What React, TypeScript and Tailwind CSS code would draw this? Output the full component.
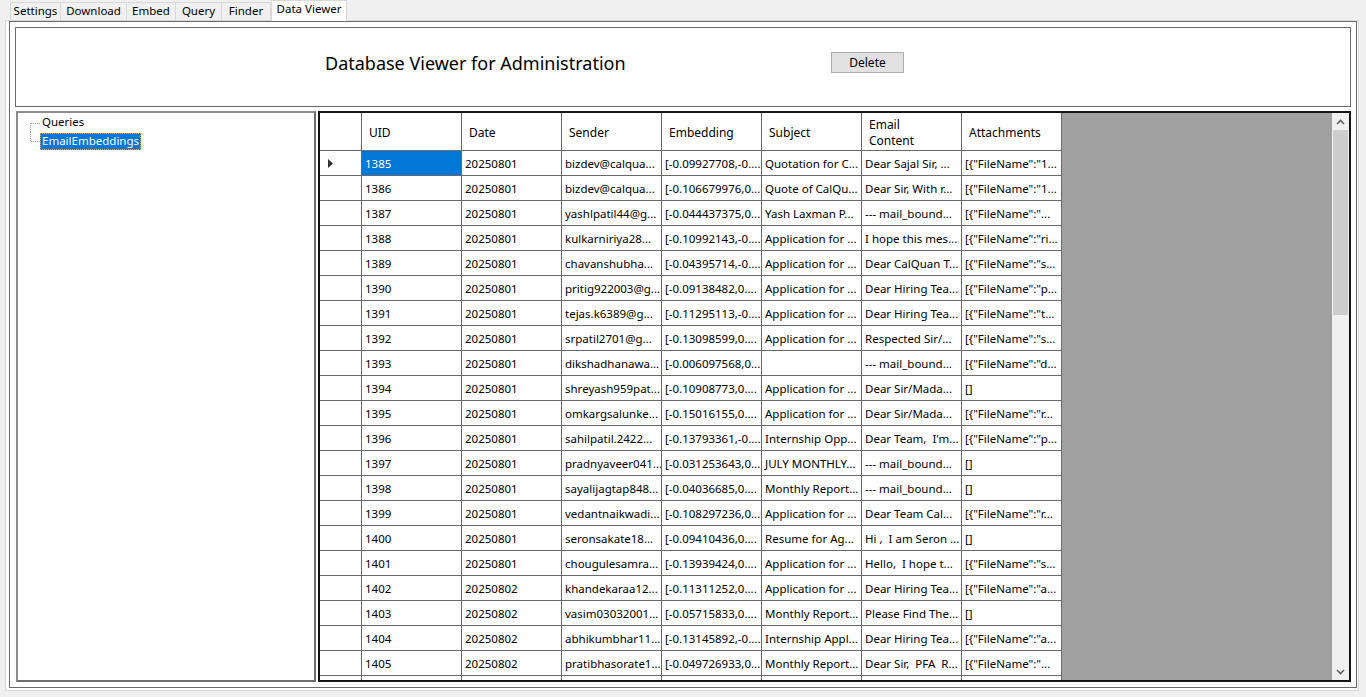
import React from "react";

const TABS = [
  { label: "Settings", w: "w-[51px]" },
  { label: "Download", w: "w-[66px]" },
  { label: "Embed", w: "w-[49px]" },
  { label: "Query", w: "w-[46px]" },
  { label: "Finder", w: "w-[49px]" },
];

const COLUMNS = ["UID", "Date", "Sender", "Embedding", "Subject", "Email\nContent", "Attachments"];

const ROWS: string[][] = [
  ["1385", "20250801", "bizdev@calqua...", "[-0.09927708,-0....", "Quotation for C...", "Dear Sajal Sir, ...", '[{"FileName":"1...'],
  ["1386", "20250801", "bizdev@calqua...", "[-0.106679976,0...", "Quote of CalQu...", "Dear Sir, With r...", '[{"FileName":"1...'],
  ["1387", "20250801", "yashlpatil44@g...", "[-0.044437375,0...", "Yash Laxman P...", "--- mail_bound...", '[{"FileName":"...'],
  ["1388", "20250801", "kulkarniriya28...", "[-0.10992143,-0....", "Application for ...", "I hope this mes...", '[{"FileName":"ri...'],
  ["1389", "20250801", "chavanshubha...", "[-0.04395714,-0....", "Application for ...", "Dear CalQuan T...", '[{"FileName":"s...'],
  ["1390", "20250801", "pritig922003@g...", "[-0.09138482,0....", "Application for ...", "Dear Hiring Tea...", '[{"FileName":"p...'],
  ["1391", "20250801", "tejas.k6389@g...", "[-0.11295113,-0....", "Application for ...", "Dear Hiring Tea...", '[{"FileName":"t...'],
  ["1392", "20250801", "srpatil2701@g...", "[-0.13098599,0....", "Application for ...", "Respected Sir/...", '[{"FileName":"s...'],
  ["1393", "20250801", "dikshadhanawa...", "[-0.006097568,0...", "", "--- mail_bound...", '[{"FileName":"d...'],
  ["1394", "20250801", "shreyash959pat...", "[-0.10908773,0....", "Application for ...", "Dear Sir/Mada...", "[]"],
  ["1395", "20250801", "omkargsalunke...", "[-0.15016155,0....", "Application for ...", "Dear Sir/Mada...", '[{"FileName":"r...'],
  ["1396", "20250801", "sahilpatil.2422...", "[-0.13793361,-0....", "Internship Opp...", "Dear Team,  I'm...", '[{"FileName":"p...'],
  ["1397", "20250801", "pradnyaveer041...", "[-0.031253643,0...", "JULY MONTHLY...", "--- mail_bound...", "[]"],
  ["1398", "20250801", "sayalijagtap848...", "[-0.04036685,0....", "Monthly Report...", "--- mail_bound...", "[]"],
  ["1399", "20250801", "vedantnaikwadi...", "[-0.108297236,0...", "Application for ...", "Dear Team Cal...", '[{"FileName":"r...'],
  ["1400", "20250801", "seronsakate18...", "[-0.09410436,0....", "Resume for Ag...", "Hi ,  I am Seron ...", "[]"],
  ["1401", "20250801", "chougulesamra...", "[-0.13939424,0....", "Application for ...", "Hello,  I hope t...", '[{"FileName":"s...'],
  ["1402", "20250802", "khandekaraa12...", "[-0.11311252,0....", "Application for ...", "Dear Hiring Tea...", '[{"FileName":"a...'],
  ["1403", "20250802", "vasim03032001...", "[-0.05715833,0....", "Monthly Report...", "Please Find The...", "[]"],
  ["1404", "20250802", "abhikumbhar11...", "[-0.13145892,-0....", "Internship Appl...", "Dear Hiring Tea...", '[{"FileName":"a...'],
  ["1405", "20250802", "pratibhasorate1...", "[-0.049726933,0...", "Monthly Report...", "Dear Sir,  PFA  R...", '[{"FileName":"...'],
  // partially visible row below the fold
  ["", "", "", "", "", "", ""],
];

function Chevron({ down }: { down?: boolean }) {
  return (
    <svg width="9" height="6" viewBox="0 0 9 6" className={down ? "rotate-180" : ""}>
      <polyline points="1,5 4.5,1.5 8,5" fill="none" stroke="#606060" strokeWidth="1.6" />
    </svg>
  );
}

function TreeNode({ label, first, selected }: { label: string; first?: boolean; selected?: boolean }) {
  return (
    <div className="flex h-[18px] items-end">
      <svg width="22" height="18" className="shrink-0 self-start">
        <line
          x1="12.5"
          y1={first ? 9 : 0}
          x2="12.5"
          y2={first ? 18 : 10}
          stroke="#a0a0a0"
          strokeDasharray="1 1"
        />
        <line x1="13" y1="9.5" x2="22" y2="9.5" stroke="#a0a0a0" strokeDasharray="1 1" />
      </svg>
      <span
        className={
          selected
            ? "h-[17px] border border-dotted border-[#f5a142] bg-[#0078d7] px-[1px] leading-[14px] text-white"
            : "h-[18px] px-[2px] leading-[16px]"
        }
      >
        {label}
      </span>
    </div>
  );
}

export default function App() {
  return (
    <div className="h-[697px] w-[1366px] overflow-hidden bg-[#f0f0f0] font-['Noto_Sans',sans-serif] text-[12px] text-black">
      {/* tab strip */}
      <div className="flex h-[20px] items-end pl-[10px] text-[11.5px]">
        {TABS.map((t, i) => (
          <div
            key={t.label}
            className={`flex h-[18px] items-center justify-center border-r border-t border-[#d9d9d9] bg-[#f0f0f0] pb-[2px] ${t.w} ${
              i === 0 ? "border-l" : ""
            }`}
          >
            {t.label}
          </div>
        ))}
        <div className="relative z-10 -mb-px flex h-[21px] w-[76px] items-start justify-center border-x border-t border-[#d9d9d9] bg-white leading-[16px]">
          Data Viewer
        </div>
      </div>

      {/* tab page */}
      <div className="ml-[5px] h-[671px] w-[1354px] border border-[#d9d9d9] bg-white pb-[2px] pl-[3px] pr-[1px]">
        <div className="h-[667px] w-[1348px] border border-[#696969] bg-white p-[5px]">
          {/* header panel */}
          <div className="h-[80px] w-[1336px] border border-[#696969] pt-[24px]">
            <div className="flex h-[21px] items-center">
              <div className="ml-[309px] w-[506px] text-[18px] leading-[24px]">Database Viewer for Administration</div>
              <button className="h-[21px] w-[73px] border border-[#adadad] bg-[#e1e1e1] text-[12px] leading-[19px]">
                Delete
              </button>
            </div>
          </div>

          <div className="mt-[4px] flex h-[571px] gap-[2px] pl-[1px]">
            {/* tree */}
            <div className="w-[300px] border-2 border-t-[#8c8c8c] border-l-[#8c8c8c] border-b-[#6e6e6e] border-r-[#6e6e6e] bg-white pt-px text-[11.5px]">
              <TreeNode label="Queries" first />
              <TreeNode label="EmailEmbeddings" selected />
            </div>

            {/* grid */}
            <div className="flex w-[1033px] border-2 border-[#141414] text-[11.5px]">
              <div className="w-[742px] shrink-0 overflow-hidden">
                <div className="flex h-[38px] border-b border-[#696969]">
                  <div className="w-[42px] shrink-0 border-r border-[#696969]" />
                  {COLUMNS.map((c) => (
                    <div
                      key={c}
                      className="flex w-[100px] shrink-0 items-center whitespace-pre border-r border-[#696969] pl-[7px] pt-[2px] text-[12px] leading-[16px]"
                    >
                      {c}
                    </div>
                  ))}
                </div>
                {ROWS.map((r, ri) => (
                  <div key={ri} className="flex h-[25px] border-b border-[#696969]">
                    <div className="flex w-[42px] shrink-0 items-center border-r border-[#696969] pl-[8px]">
                      {ri === 0 && (
                        <svg width="5" height="9" viewBox="0 0 5 9">
                          <polygon points="0,0 5,4.5 0,9" fill="#333333" />
                        </svg>
                      )}
                    </div>
                    {r.map((v, ci) => (
                      <div
                        key={ci}
                        className={`flex w-[100px] shrink-0 items-center overflow-hidden whitespace-pre border-r border-[#696969] pl-[3px] pt-[2px] ${
                          ri === 0 && ci === 0 ? "bg-[#0078d7] text-white" : ""
                        }`}
                      >
                        {v}
                      </div>
                    ))}
                  </div>
                ))}
              </div>
              <div className="flex-1 bg-[#a0a0a0]" />
              <div className="flex w-[17px] shrink-0 flex-col bg-[#f0f0f0]">
                <div className="flex h-[17px] items-center justify-center">
                  <Chevron />
                </div>
                <div className="mx-px h-[185px] bg-[#cdcdcd]" />
                <div className="flex-1" />
                <div className="flex h-[17px] items-center justify-center">
                  <Chevron down />
                </div>
              </div>
            </div>
          </div>
        </div>
      </div>
    </div>
  );
}
